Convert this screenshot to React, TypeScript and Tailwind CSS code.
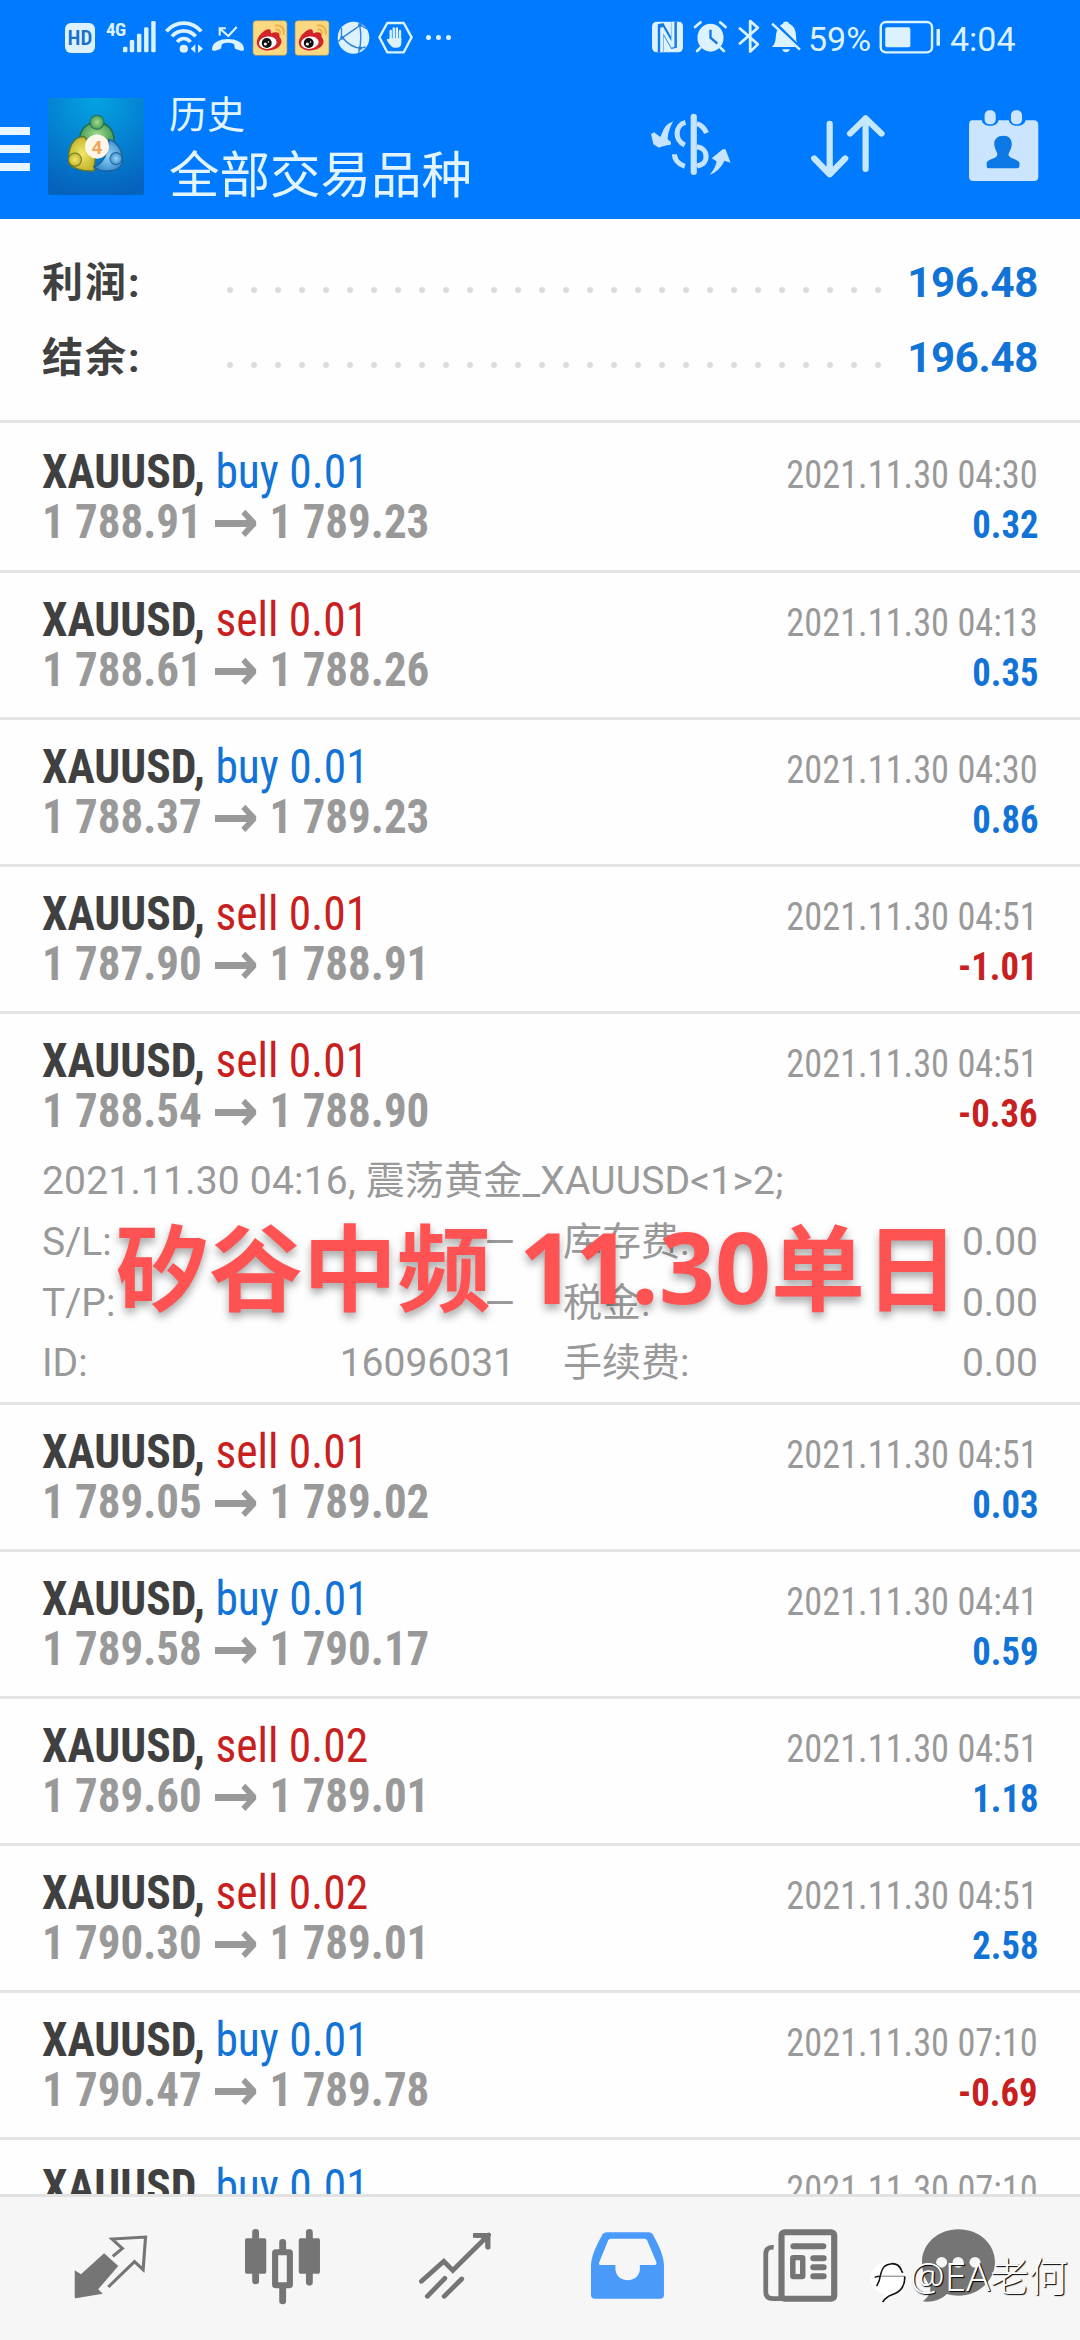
import React, { ReactNode } from "react";

const PALE = "#dcf2ff";

type Deal = {
  side: "buy" | "sell";
  lots: string;
  from: string;
  to: string;
  time: string;
  profit: string;
  details?: boolean;
};

const DEALS: Deal[] = [
  { side: "buy", lots: "0.01", from: "1 788.91", to: "1 789.23", time: "2021.11.30 04:30", profit: "0.32" },
  { side: "sell", lots: "0.01", from: "1 788.61", to: "1 788.26", time: "2021.11.30 04:13", profit: "0.35" },
  { side: "buy", lots: "0.01", from: "1 788.37", to: "1 789.23", time: "2021.11.30 04:30", profit: "0.86" },
  { side: "sell", lots: "0.01", from: "1 787.90", to: "1 788.91", time: "2021.11.30 04:51", profit: "-1.01" },
  { side: "sell", lots: "0.01", from: "1 788.54", to: "1 788.90", time: "2021.11.30 04:51", profit: "-0.36", details: true },
  { side: "sell", lots: "0.01", from: "1 789.05", to: "1 789.02", time: "2021.11.30 04:51", profit: "0.03" },
  { side: "buy", lots: "0.01", from: "1 789.58", to: "1 790.17", time: "2021.11.30 04:41", profit: "0.59" },
  { side: "sell", lots: "0.02", from: "1 789.60", to: "1 789.01", time: "2021.11.30 04:51", profit: "1.18" },
  { side: "sell", lots: "0.02", from: "1 790.30", to: "1 789.01", time: "2021.11.30 04:51", profit: "2.58" },
  { side: "buy", lots: "0.01", from: "1 790.47", to: "1 789.78", time: "2021.11.30 07:10", profit: "-0.69" },
  { side: "buy", lots: "0.01", from: "1 790.47", to: "1 789.78", time: "2021.11.30 07:10", profit: "-0.69" },
];

function Icon({ box, className, children }: { box: string; className: string; children: ReactNode }) {
  return (
    <svg viewBox={box} preserveAspectRatio="none" className={`block shrink-0 ${className}`} fill="none">
      {children}
    </svg>
  );
}

function Weibo({ className }: { className: string }) {
  return (
    <Icon box="0 0 105 105" className={className}>
      <rect x="3" y="2" width="99" height="101" rx="9" fill="#fbd983" stroke="#a79a5c" strokeWidth="2" />
      <path d="M14 66C14 48 36 26 50 27c7 1 5 12 6 12 10-5 24-6 24 5 0 7 1 6 4 11 8 14-8 34-36 34-20 0-34-10-34-23z" fill="#d2232a" />
      <ellipse cx="46" cy="66" rx="26" ry="18" transform="rotate(-8 46 66)" fill="#fff" />
      <circle cx="43" cy="67" r="14.5" fill="#111" />
      <circle cx="39" cy="70" r="4.5" fill="#fff" />
      <circle cx="48" cy="64" r="2" fill="#fff" />
      <path d="M69 16c14-3 27 8 23 25M71 28c7-1 12 4 10 11" stroke="#f0b04c" strokeWidth="6" strokeLinecap="round" />
    </Icon>
  );
}

function StatusBar() {
  return (
    <div className="flex h-[76px] items-start pt-[18px] pl-[65px] text-[#dcf2ff]">
      <div className="mt-[5px] flex h-[30px] w-[30px] items-center justify-center rounded-[6px] bg-[#dcf2ff] font-['Roboto_Condensed'] text-[21px] font-semibold leading-none text-[#1a6fcc]">
        HD
      </div>
      <div className="mt-[2px] ml-[11px] w-[17px] font-['Roboto_Condensed'] text-[19px] font-bold leading-[20px] tracking-[-0.5px]">4G</div>
      <Icon box="357 55 100 120" className="h-[40px] w-[34px]">
        <g fill={PALE}>
          <rect x="357" y="141" width="13" height="17" rx="4" />
          <rect x="377" y="121" width="13" height="37" rx="4" />
          <rect x="398" y="102" width="13" height="56" rx="4" />
          <rect x="419" y="83" width="13" height="75" rx="4" />
          <rect x="440" y="64" width="13" height="94" rx="4" />
        </g>
      </Icon>
      <Icon box="479 55 112 120" className="ml-[8px] h-[40px] w-[39px]">
        <g stroke={PALE} strokeWidth="11">
          <path d="M483 95C510 62 556 62 583 95" />
          <path d="M499 110C517 88 549 88 567 110" />
          <path d="M514 127C524 113 542 113 552 127" />
        </g>
        <path d="M521 147a12 12 0 0 1 24 0a12 12 0 0 1-24 0zM566 134v26l-13-13zM574 134v26l14-13z" fill={PALE} />
      </Icon>
      <Icon box="608 55 98 120" className="ml-[7px] h-[40px] w-[34px]">
        <path d="M633 108V86h18M634 87l24 22 24-27" stroke={PALE} strokeWidth="6" />
        <path d="M611 148c0-40 92-40 92 0 0 6-6 6-9 5l-15-5c-4-2-3-14-5-15-12-5-23-5-34 0-2 1-1 13-5 15l-15 5c-3 1-9 1-9-5z" fill={PALE} />
      </Icon>
      <Weibo className="mt-[2px] ml-[7px] h-[36px] w-[36px]" />
      <Weibo className="mt-[2px] ml-[6px] h-[36px] w-[36px]" />
      <Icon box="975 55 96 120" className="ml-[7px] h-[40px] w-[33px]">
        <ellipse cx="1023" cy="114" rx="46" ry="48" fill={PALE} />
        <path d="M988 116C1010 100 1030 86 1044 76M990 112C1004 132 1022 144 1046 146M1040 72C1046 100 1046 130 1038 160M976 128l14-14M988 112V84M1046 78l16 10M1042 146l16-4" stroke="#2f84d8" strokeWidth="4" />
        <path d="M984 114a6 6 0 0 1 12 0a6 6 0 0 1-12 0zM1036 76a6 6 0 0 1 12 0a6 6 0 0 1-12 0zM1036 146a6 6 0 0 1 12 0a6 6 0 0 1-12 0z" fill="#2f84d8" />
      </Icon>
      <Icon box="1093 55 102 120" className="ml-[8px] h-[40px] w-[35px]">
        <path d="M1120 70h48l23 43-23 45h-48l-23-45z" stroke={PALE} strokeWidth="7" strokeLinejoin="round" />
        <path d="M1130 122v-28M1139 120V86M1148 120V86M1157 122v-28" stroke={PALE} strokeWidth="7" strokeLinecap="round" />
        <path d="M1126 116h35v14c0 10-5 14-14 14h-6c-8 0-13-8-21-20-3-6 1-9 6-5z" fill={PALE} />
      </Icon>
      <div className="mt-[17px] ml-[13px] flex gap-[5px]">
        <div className="h-[5px] w-[5px] rounded-full bg-[#dcf2ff]" />
        <div className="h-[5px] w-[5px] rounded-full bg-[#dcf2ff]" />
        <div className="h-[5px] w-[5px] rounded-full bg-[#dcf2ff]" />
      </div>

      <Icon box="320 55 95 120" className="ml-[200px] h-[40px] w-[33px]">
        <path d="M338 66h62q12 0 12 14v62q0 16-14 16h-60q-15 0-15-17V82q0-16 15-16z" fill={PALE} />
        <path d="M348 158V74l38 70V66" stroke="#1478e8" strokeWidth="17" />
        <path d="M351 158V84l32 58V66" stroke={PALE} strokeWidth="9" />
      </Icon>
      <Icon box="440 55 102 120" className="ml-[9px] h-[40px] w-[35px]">
        <ellipse cx="491" cy="114" rx="38" ry="42" fill={PALE} />
        <path d="M446 82l16-14M535 82l-16-14M462 144l-10 10M520 144l10 10" stroke={PALE} strokeWidth="8" strokeLinecap="round" />
        <path d="M491 90v24l20 18" stroke="#1478e8" strokeWidth="7" />
      </Icon>
      <Icon box="567 55 72 120" className="ml-[9px] h-[40px] w-[25px]">
        <path d="M573 84l54 50-22 22V64l22 20-54 50" stroke={PALE} strokeWidth="8" strokeLinejoin="round" />
      </Icon>
      <Icon box="663 55 92 120" className="ml-[8px] h-[40px] w-[32px]">
        <path d="M668 142c14-12 10-30 14-46 3-12 9-20 18-24 2-9 16-9 18 0 16 7 20 24 20 40 0 14 4 22 10 30z" fill={PALE} />
        <path d="M698 149h22c-2 12-20 12-22 0z" fill={PALE} />
        <path d="M672 64l82 84" stroke="#007aff" strokeWidth="8" />
        <path d="M669 72l80 78" stroke={PALE} strokeWidth="7" />
      </Icon>
      <div className="ml-[6px] w-[71px] font-['Roboto'] text-[34px] leading-[42px]">59%</div>
      <Icon box="978 55 180 120" className="h-[40px] w-[62px]">
        <rect x="983" y="67" width="149" height="91" rx="15" stroke={PALE} strokeWidth="7" />
        <rect x="996" y="83" width="73" height="60" rx="6" fill={PALE} />
        <path d="M1150 88v50" stroke={PALE} strokeWidth="10" />
      </Icon>
      <div className="ml-[9px] font-['Roboto'] text-[34px] leading-[42px]">4:04</div>
    </div>
  );
}

function AppLogo() {
  return (
    <Icon box="0 0 96 96" className="mt-[22px] ml-[18px] h-[97px] w-[96px]">
      <defs>
        <radialGradient id="sky" cx="0.5" cy="0" r="1">
          <stop offset="0" stopColor="#04a4e2" />
          <stop offset="0.55" stopColor="#0580d0" />
          <stop offset="1" stopColor="#0663bd" />
        </radialGradient>
        <radialGradient id="leaf"><stop offset="0" stopColor="#a4dc90" /><stop offset="1" stopColor="#459c54" /></radialGradient>
        <radialGradient id="gold"><stop offset="0" stopColor="#f4e86c" /><stop offset="1" stopColor="#c4b62e" /></radialGradient>
        <radialGradient id="sea"><stop offset="0" stopColor="#9ad4f6" /><stop offset="1" stopColor="#3f92d2" /></radialGradient>
      </defs>
      <rect width="96" height="96" rx="2" fill="url(#sky)" />
      <path d="M32 46c-2-14 6-22 17-22s20 10 16 24z" fill="url(#leaf)" stroke="#1d6b52" strokeWidth="1.5" />
      <path d="M21 64c-2-14 4-26 15-26l12 14-2 20c-8 1-24-2-25-8z" fill="url(#gold)" stroke="#5d7a30" strokeWidth="1.5" />
      <path d="M46 68c8-2 14-12 15-27 10 3 15 14 13 24-3 8-20 10-28 3z" fill="url(#sea)" stroke="#1c639c" strokeWidth="1.5" />
      <circle cx="49" cy="24" r="7" fill="url(#leaf)" stroke="#1d6b52" />
      <circle cx="27" cy="61" r="6.5" fill="url(#gold)" stroke="#6d7425" />
      <circle cx="68" cy="60" r="6" fill="url(#sea)" stroke="#1c639c" />
      <circle cx="49" cy="48" r="12" fill="#fff6ea" />
      <text x="49" y="55" textAnchor="middle" fontFamily="Roboto" fontWeight="700" fontSize="19" fill="#f0a45c">4</text>
    </Icon>
  );
}

function TitleBar() {
  return (
    <div className="flex h-[143px] items-start">
      <div className="mt-[51px] flex w-[30px] flex-col gap-[10px]">
        <div className="h-[8px] bg-[#eaf6ff]" />
        <div className="h-[8px] bg-[#eaf6ff]" />
        <div className="h-[8px] bg-[#eaf6ff]" />
      </div>
      <AppLogo />
      <div className="ml-[25px] w-[481px] font-['Noto_Sans_CJK_SC'] text-[#e2f5ff]">
        <div className="mt-[10px] text-[38px] leading-[52px]">历史</div>
        <div className="mt-[1px] text-[50.5px] leading-[64px]">全部交易品种</div>
      </div>
      <Icon box="320 325 232 225" className="mt-[32px] ml-[1px] h-[75px] w-[80px]">
        <g fill="#c6e4ff">
          <path d="M385 364l-4 3c-14 5-23 15-28 31l-6 14-18-14-9 5 7 31 16 10c9-4 20-8 34-9l1-8-10-9c2-22 8-38 17-54z" />
          <path d="M490 525l4-4c10-14 14-22 16-36l-14-9 32-27h8l15 40-18-6c-7 16-22 36-43 42z" />
          <rect x="435" y="342" width="18" height="184" rx="9" />
        </g>
        <path d="M420 368c-30 8-34 54-2 68M453 372q18 5 28 28M388 464c0 14 10 30 30 36M453 442c34 2 36 50 4 56l-4 2" stroke="#c6e4ff" strokeWidth="15" />
      </Icon>
      <Icon box="780 325 220 225" className="mt-[32px] ml-[79px] h-[75px] w-[76px]">
        <path d="M837 372v152M792 476l45 48 45-48M941 508V356M896 402l45-46 46 46" stroke="#c6e8ff" strokeWidth="18" strokeLinecap="round" strokeLinejoin="round" />
      </Icon>
      <Icon box="1240 325 205 225" className="mt-[32px] ml-[82px] h-[75px] w-[71px]">
        <path d="M1252 362h28c2 22 46 22 48 0h30c2 22 46 22 48 0h24q13 0 13 14v156q0 12-13 12h-174q-13 0-13-12V376q0-14 9-14z" fill="#cbe5ff" />
        <rect x="1288" y="332" width="32" height="42" rx="14" fill="#cbe5ff" />
        <rect x="1364" y="332" width="32" height="42" rx="14" fill="#cbe5ff" />
        <path d="M1342 408c18 0 26 13 24 29-1 12-7 19-9 27-1 13 30 15 32 26l-1 11q-1 5-6 5h-81q-6 0-7-5v-12c3-11 32-12 31-26-2-8-8-15-9-27-2-16 8-28 26-28z" fill="#0c78e6" />
      </Icon>
    </div>
  );
}

function SummaryLine({ label, value }: { label: string; value: string }) {
  return (
    <div className="flex h-[75px] items-baseline justify-between pr-[42px] pl-[42px] leading-[75px]">
      <span className="w-[185px] font-['Roboto','Noto_Sans_CJK_SC'] text-[41px] font-bold tracking-[2px] text-[#404040]">{label}</span>
      <span className="flex flex-1 gap-[18px]">
        {Array.from({ length: 28 }, (_, i) => (
          <i key={i} className="h-[6px] w-[6px] shrink-0 -translate-y-[4px] rounded-full bg-[#dcdcdc]" />
        ))}
      </span>
      <span className="font-['Roboto'] text-[42px] font-bold tracking-[-0.3px] text-[#1273d6]">{value}</span>
    </div>
  );
}

function DetailLine({ a, av, b, bv }: { a: string; av: string; b: string; bv: string }) {
  return (
    <div className="flex h-[60.6px] justify-between">
      <div className="flex w-[473px] justify-between">
        <span>{a}</span>
        <span>{av}</span>
      </div>
      <div className="flex w-[475px] justify-between">
        <span>{b}</span>
        <span>{bv}</span>
      </div>
    </div>
  );
}

function DealRow({ deal, first }: { deal: Deal; first: boolean }) {
  const blue = deal.side === "buy";
  const loss = deal.profit.startsWith("-");
  return (
    <div
      className={`shrink-0 border-t-[3px] border-[#e4e4e4] pr-[42px] pl-[42px] font-['Roboto_Condensed'] ${
        first ? "h-[150px] pt-[24px]" : deal.details ? "h-[391px] pt-[22px]" : "h-[147px] pt-[22px]"
      }`}
    >
      <div className="flex h-[50px] items-baseline justify-between leading-[50px]">
        <span className="origin-left scale-x-[0.948] text-[48px] whitespace-pre">
          <span className="font-bold text-[#404040]">XAUUSD, </span>
          <span className={blue ? "text-[#1273d6]" : "text-[#c8201f]"}>
            {deal.side} {deal.lots}
          </span>
        </span>
        <span className="origin-right scale-x-[0.932] text-[39px] text-[#999]">{deal.time}</span>
      </div>
      <div className="flex h-[50px] items-baseline justify-between leading-[50px]">
        <span className="flex origin-left scale-x-[0.937] items-baseline text-[48px] font-bold text-[#999]">
          <span>{deal.from}</span>
          <span className="mx-[11px] translate-y-[4px] font-['DejaVu_Sans'] text-[60px] leading-[30px]">→</span>
          <span>{deal.to}</span>
        </span>
        <span className={`origin-right scale-x-[0.94] text-[39px] font-bold ${loss ? "text-[#c8201f]" : "text-[#1273d6]"}`}>{deal.profit}</span>
      </div>
      {deal.details && (
        <div className="mt-[15px] font-['Roboto','Noto_Sans_CJK_SC'] text-[39px] leading-[60.6px] font-normal text-[#999]">
          <div className="h-[61px] tracking-[0.2px]">2021.11.30 04:16, 震荡黄金_XAUUSD&lt;1&gt;2;</div>
          <DetailLine a="S/L:" av="—" b="库存费:" bv="0.00" />
          <DetailLine a="T/P:" av="—" b="税金:" bv="0.00" />
          <DetailLine a="ID:" av="16096031" b="手续费:" bv="0.00" />
        </div>
      )}
    </div>
  );
}

function TabBar() {
  return (
    <nav className="flex h-[146px] items-start border-t-[3px] border-[#e2e2e2] bg-[#f6f6f6] pt-[30px] pl-[73px]">
      <Icon box="210 320 220 240" className="h-[80px] w-[76px]">
        <path d="M215 450l18 12 67-63 41 38-58 70 13 13-78 14q-3 0-3-4z" fill="#757575" />
        <path d="M325 408l28-24-30-28 97-6-7 98-25-24-76 76" stroke="#757575" strokeWidth="9" />
      </Icon>
      <Icon box="705 320 225 240" className="ml-[95px] h-[80px] w-[77px]">
        <path d="M739 336v146M896 336v150M818 366v28M818 500v42" stroke="#757575" strokeWidth="20" strokeLinecap="round" />
        <rect x="708" y="354" width="62" height="106" rx="5" fill="#757575" />
        <rect x="865" y="354" width="62" height="106" rx="5" fill="#757575" />
        <rect x="796" y="396" width="43" height="99" rx="2" stroke="#757575" strokeWidth="18" />
      </Icon>
      <Icon box="1210 320 215 240" className="ml-[97px] h-[80px] w-[74px]">
        <path d="M1220 483l65-60 26 27 104-106M1377 345h36v36M1237 528l51-54M1286 528l51-52" stroke="#757575" strokeWidth="14" strokeLinecap="round" />
        <path d="M1370 338h50v48l-14-2v-20l-14-12h-22z" fill="#757575" />
      </Icon>
      <Icon box="145 320 215 240" className="ml-[99px] h-[80px] w-[74px]">
        <path d="M192 336h120c8 0 12 4 15 11 16 30 29 60 30 86v91q0 11-11 11H156q-11 0-11-11v-91c2-28 16-58 31-86 3-7 7-11 16-11z" fill="#4a9bf9" />
        <path d="M202 355h99q5 0 7 5l27 66c1 5 0 8-5 8h-43v14c-5 42-66 42-71 0v-14h-43c-5 0-6-3-4-8l26-66q2-5 7-5z" fill="#f6f6f6" />
      </Icon>
      <Icon box="643 320 225 240" className="ml-[97px] h-[80px] w-[77px]">
        <rect x="700" y="336" width="154" height="199" rx="9" stroke="#757575" strokeWidth="18" />
        <path d="M677 381q-23-2-23 20v114q0 20 22 20h24" stroke="#757575" strokeWidth="14" />
        <path d="M735 378h87M793 414h30M793 441h30M793 468h30" stroke="#757575" strokeWidth="18" strokeLinecap="round" />
        <rect x="733" y="412" width="29" height="57" rx="2" stroke="#757575" strokeWidth="16" />
      </Icon>
      <Icon box="1108 320 215 240" className="ml-[83px] h-[80px] w-[74px]">
        <path d="M1214 327c60 0 106 44 106 98s-46 101-106 101c-10 0-24-2-34-5-16 18-44 26-70 22 16-12 24-26 22-46-16-20-24-44-24-72 0-54 46-98 106-98z" fill="#757575" />
        <circle cx="1165" cy="426" r="16" fill="#f6f6f6" />
        <circle cx="1213" cy="426" r="16" fill="#f6f6f6" />
        <circle cx="1262" cy="426" r="16" fill="#f6f6f6" />
      </Icon>
    </nav>
  );
}

export default function App() {
  return (
    <div className="relative flex h-[2340px] w-[1080px] flex-col overflow-hidden bg-[#fefefe]">
      <header className="h-[219px] shrink-0 bg-[#007aff]">
        <StatusBar />
        <TitleBar />
      </header>
      <main className="flex h-[1975px] shrink-0 flex-col overflow-hidden">
        <section className="h-[201px] shrink-0 pt-[26px]">
          <SummaryLine label="利润:" value="196.48" />
          <SummaryLine label="结余:" value="196.48" />
        </section>
        {DEALS.map((d, i) => (
          <DealRow key={i} deal={d} first={i === 0} />
        ))}
      </main>
      <TabBar />

      <div className="absolute top-[1198px] left-[115px] flex items-baseline font-['Noto_Sans_CJK_SC'] text-[94px] leading-[130px] font-bold whitespace-pre text-[#ff5252] [text-shadow:0_5px_8px_rgba(0,0,0,0.35)]">
        <span>矽谷中频</span>
        <span className="ml-[28px] font-['Open_Sans'] text-[98px]">11.30</span>
        <span>单日</span>
      </div>

      <div className="absolute top-[2249px] left-[870px] flex items-start text-white">
        <Icon box="30 140 120 130" className="mt-[12px] h-[43px] w-[40px]">
          <path d="M66 258c2-8 6-12 12-18-30-4-48-24-46-50 2-28 24-46 52-44 30 2 50 20 50 46 0 28-22 44-46 52-8 3-14 8-22 14z" fill="#fff" />
          <path d="M96 148C74 150 66 160 62 180c-2 16-6 26-12 36M44 190c4-4 8-4 14-4" stroke="#111" strokeWidth="4.5" />
          <path d="M60 186h72" stroke="#333" strokeWidth="2" />
          <path d="M96 148c14 0 24 8 28 20l4 8M134 186c2 30-14 48-38 56-12 4-20 10-28 22" stroke="#111" strokeWidth="5" />
        </Icon>
        <span className="font-['Noto_Sans','Noto_Sans_CJK_SC'] text-[39px] leading-[54px] font-light whitespace-nowrap [text-shadow:1px_1px_1px_#000,1px_0_0_rgba(0,0,0,0.5)]">
          @EA老何
        </span>
      </div>
    </div>
  );
}
